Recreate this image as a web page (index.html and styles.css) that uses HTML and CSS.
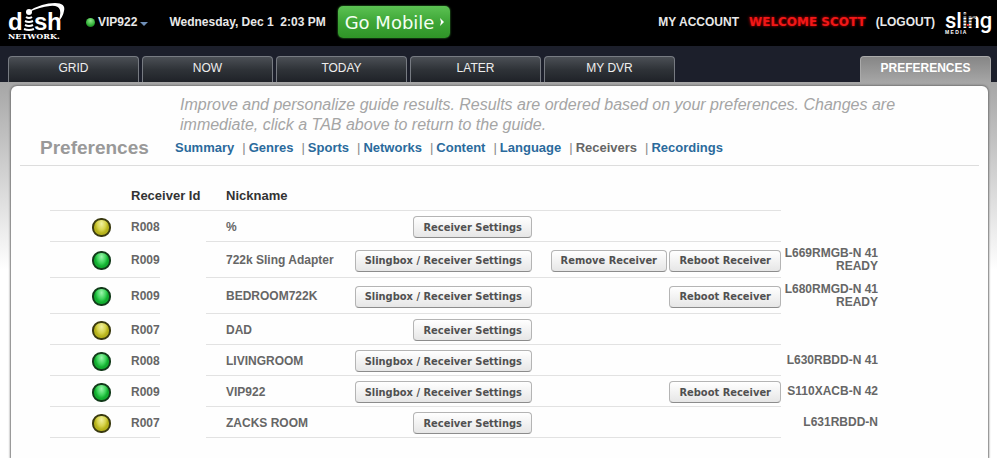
FILE: index.html
```html
<!DOCTYPE html>
<html lang="en">
<head>
    <meta charset="UTF-8">
    <meta name="viewport" content="width=device-width, initial-scale=1.0">
    <title>DISH Network - Preferences</title>
    <link rel="stylesheet" href="styles.css">
</head>
<body>
    <header class="top-bar">
        <a class="logo" href="#" aria-label="Dish Network">
            <svg width="58" height="38" viewBox="0 0 58 38" fill="#fff">
                <text class="logo-dish" x="0" y="27">d</text>
                <text class="logo-dish" x="26" y="27">s</text>
                <text class="logo-dish" x="39" y="27">h</text>
                <circle cx="21" cy="9" r="3"/>
                <path d="M21 8 Q34 0 47 0 Q58 0 56 8 Q55 14 50 19 Q53 12 52 7 Q50 2 42 3 Q32 4 21 9Z"/>
                <g fill="none" stroke="#fff" stroke-width="2">
                    <path d="M18 14 Q21 16 24 14"/>
                    <path d="M17 18 Q21 20 25 18"/>
                    <path d="M17 22 Q21 24 25 22"/>
                    <path d="M16 26 Q21 28 26 26"/>
                </g>
                <text class="logo-network" x="0" y="36">NETWORK.</text>
            </svg>
        </a>
        <button class="receiver-menu" type="button">
            <span class="status-dot"></span>
            VIP922
            <span class="arrow"></span>
        </button>
        <span class="date">Wednesday, Dec 1 &nbsp;2:03 PM</span>
        <a class="go-mobile" href="#">Go Mobile
            <svg width="4" height="8" viewBox="0 0 4 8" fill="#fff"><path d="M0 0 L4 4 L0 8 L1 4Z"/></svg>
        </a>
        <div class="account">
            <a href="#">MY ACCOUNT</a>
            <span class="welcome">WELCOME SCOTT</span>
            <a href="#">(LOGOUT)</a>
            <a class="sling" href="#" aria-label="Sling Media">
                <svg width="46" height="26" viewBox="0 0 46 26" fill="#fff">
                    <text class="sling-name" x="0" y="19">sling</text>
                    <g stroke="#000" stroke-width="1">
                        <path d="M17 5H31M17 8H31M17 11H31M17 14H31M17 17H31"/>
                    </g>
                    <rect x="22" y="15" width="2" height="2" fill="#e33"/>
                    <text class="sling-media" x="0" y="25">M E D I A</text>
                </svg>
            </a>
        </div>
    </header>

    <nav class="tabs">
        <a href="#">GRID</a>
        <a href="#">NOW</a>
        <a href="#">TODAY</a>
        <a href="#">LATER</a>
        <a href="#">MY DVR</a>
        <a class="active" href="#">PREFERENCES</a>
    </nav>

    <main class="panel">
        <div class="panel-head">
            <h1>Preferences</h1>
            <div class="panel-info">
                <p>Improve and personalize guide results. Results are ordered based on your preferences. Changes are immediate, click a TAB above to return to the guide.</p>
                <ul class="sub-nav">
                    <li><a href="#">Summary</a></li>
                    <li><a href="#">Genres</a></li>
                    <li><a href="#">Sports</a></li>
                    <li><a href="#">Networks</a></li>
                    <li><a href="#">Content</a></li>
                    <li><a href="#">Language</a></li>
                    <li><a class="current" href="#">Receivers</a></li>
                    <li><a href="#">Recordings</a></li>
                </ul>
            </div>
        </div>

        <table class="receivers">
            <colgroup>
                <col class="col-light">
                <col class="col-id">
                <col class="col-gap">
                <col class="col-name">
                <col class="col-settings">
                <col class="col-remove">
                <col class="col-reboot">
                <col class="col-status">
            </colgroup>
            <thead>
                <tr>
                    <th></th>
                    <th colspan="2">Receiver Id</th>
                    <th class="name">Nickname</th>
                    <th></th>
                    <th></th>
                    <th></th>
                    <th class="status"></th>
                </tr>
            </thead>
            <tbody>
                <tr>
                    <td class="light"><span class="led yellow"></span></td>
                    <td>R008</td>
                    <td class="gap"></td>
                    <td class="name">%</td>
                    <td class="action"><button type="button">Receiver Settings</button></td>
                    <td class="action"></td>
                    <td class="action"></td>
                    <td class="status"></td>
                </tr>
                <tr>
                    <td class="light"><span class="led green"></span></td>
                    <td>R009</td>
                    <td class="gap"></td>
                    <td class="name">722k Sling Adapter</td>
                    <td class="action"><button type="button">Slingbox / Receiver Settings</button></td>
                    <td class="action"><button type="button">Remove Receiver</button></td>
                    <td class="action"><button type="button">Reboot Receiver</button></td>
                    <td class="status">L669RMGB-N 41<br>READY</td>
                </tr>
                <tr>
                    <td class="light"><span class="led green"></span></td>
                    <td>R009</td>
                    <td class="gap"></td>
                    <td class="name">BEDROOM722K</td>
                    <td class="action"><button type="button">Slingbox / Receiver Settings</button></td>
                    <td class="action"></td>
                    <td class="action"><button type="button">Reboot Receiver</button></td>
                    <td class="status">L680RMGD-N 41<br>READY</td>
                </tr>
                <tr>
                    <td class="light"><span class="led yellow"></span></td>
                    <td>R007</td>
                    <td class="gap"></td>
                    <td class="name">DAD</td>
                    <td class="action"><button type="button">Receiver Settings</button></td>
                    <td class="action"></td>
                    <td class="action"></td>
                    <td class="status"></td>
                </tr>
                <tr>
                    <td class="light"><span class="led green"></span></td>
                    <td>R008</td>
                    <td class="gap"></td>
                    <td class="name">LIVINGROOM</td>
                    <td class="action"><button type="button">Slingbox / Receiver Settings</button></td>
                    <td class="action"></td>
                    <td class="action"></td>
                    <td class="status">L630RBDD-N 41</td>
                </tr>
                <tr>
                    <td class="light"><span class="led green"></span></td>
                    <td>R009</td>
                    <td class="gap"></td>
                    <td class="name">VIP922</td>
                    <td class="action"><button type="button">Slingbox / Receiver Settings</button></td>
                    <td class="action"></td>
                    <td class="action"><button type="button">Reboot Receiver</button></td>
                    <td class="status">S110XACB-N 42</td>
                </tr>
                <tr>
                    <td class="light"><span class="led yellow"></span></td>
                    <td>R007</td>
                    <td class="gap"></td>
                    <td class="name">ZACKS ROOM</td>
                    <td class="action"><button type="button">Receiver Settings</button></td>
                    <td class="action"></td>
                    <td class="action"></td>
                    <td class="status">L631RBDD-N</td>
                </tr>
            </tbody>
        </table>
    </main>
</body>
</html>
```

FILE: styles.css
```css
* {
    box-sizing: border-box;
}
body {
    margin: 0;
    min-height: 100vh;
    display: flex;
    flex-direction: column;
    font-family: "Liberation Sans", Arial, sans-serif;
    font-size: 12px;
    color: #666;
    background: linear-gradient(#a6a6a6 82px, #fff 270px) no-repeat #fff;
}
a {
    color: inherit;
    text-decoration: none;
}

/* top bar */
.top-bar {
    display: flex;
    align-items: center;
    height: 46px;
    padding: 0 6px 2px 8px;
    background: #000;
    color: #e8e8e8;
    font-weight: bold;
    white-space: nowrap;
}
.logo svg, .sling svg {
    display: block;
    overflow: visible;
}
.logo-dish {
    font: bold 24px "Liberation Sans", Arial, sans-serif;
}
.logo-network {
    font: bold 8px "DejaVu Serif", serif;
}
.receiver-menu {
    display: flex;
    align-items: center;
    gap: 3px;
    margin-left: 20px;
    padding: 0;
    border: 0;
    background: none;
    color: inherit;
    font: inherit;
    cursor: pointer;
}
.status-dot {
    width: 9px;
    height: 9px;
    border-radius: 50%;
    background: radial-gradient(circle at 50% 30%, #8fe88a, #2fae35 60%, #0c4a10);
}
.arrow {
    margin-top: 4px;
    border: 4px solid transparent;
    border-top-color: #6f8fb8;
    border-bottom: 0;
}
.date {
    margin-left: 21px;
}
.go-mobile {
    display: flex;
    align-items: center;
    justify-content: space-between;
    width: 112px;
    height: 32px;
    margin-left: 12px;
    padding: 0 6px 0 7px;
    border-radius: 5px;
    background: linear-gradient(#5cc253, #3ea637 50%, #2f9427);
    box-shadow: 0 0 2px #3fae38;
    color: #f4fff2;
    font: 18px "DejaVu Sans", Verdana, sans-serif;
}
.account {
    display: flex;
    align-items: center;
    gap: 10px;
    margin-left: auto;
}
.welcome {
    color: #f01818;
    font-family: "DejaVu Sans", Verdana, sans-serif;
    text-shadow: 0 0 3px #d00;
}
.sling-name {
    font: 500 22px Roboto, sans-serif;
}
.sling-media {
    font: bold 5px "Liberation Sans", Arial, sans-serif;
}

/* tabs */
.tabs {
    display: flex;
    gap: 3px;
    height: 36px;
    padding: 10px 6px 0 8px;
    background: #1c1f2b;
    color: #eee;
}
.tabs a {
    width: 131px;
    height: 26px;
    border: 1px solid #777b82;
    border-bottom: 0;
    border-radius: 4px 4px 0 0;
    background: linear-gradient(#4b4f55, #2f3338 50%, #1f2228);
    line-height: 23px;
    text-align: center;
}
.tabs .active {
    margin-left: auto;
    border-color: #aaa;
    background: linear-gradient(#868686, #a6a6a6);
    color: #fff;
    font-weight: bold;
}

/* content */
.panel {
    flex: 1;
    margin: 4px 9px 0 11px;
    padding: 9px;
    border-radius: 6px 6px 0 0;
    background: #fefefe;
    box-shadow: 0 0 2px 1px #777;
}
.panel-head {
    display: flex;
    align-items: flex-end;
    padding: 0 80px 7px 20px;
    border-bottom: 1px solid #ddd;
}
.panel-head h1 {
    width: 135px;
    margin: 0;
    font-size: 19px;
    line-height: 20px;
    color: #999;
}
.panel-info {
    flex: 1;
}
.panel-info p {
    margin: 0 0 3px 5px;
    font-size: 16px;
    font-style: italic;
    line-height: 20px;
    color: #a5a5a5;
}
.sub-nav {
    display: flex;
    margin: 0;
    padding: 0;
    list-style: none;
    font-size: 13px;
    font-weight: bold;
    line-height: 20px;
    color: #2a6a9c;
}
.sub-nav li + li::before {
    content: "|";
    margin: 0 3px 0 8px;
    font-weight: normal;
    color: #888;
}
.sub-nav .current {
    color: #666;
}

/* receiver list */
.receivers {
    margin: 15px 0 0 30px;
    border-collapse: separate;
    border-spacing: 0;
    table-layout: fixed;
    width: 828px;
    font-weight: bold;
    line-height: 13px;
}
.col-light {
    width: 81px;
}
.col-id {
    width: 29px;
}
.col-gap {
    width: 46px;
}
.col-name {
    width: 148px;
}
.col-settings {
    width: 178px;
}
.col-remove {
    width: 135px;
}
.col-reboot {
    width: 114px;
}
.receivers th {
    height: 30px;
    padding: 0;
    border-bottom: 1px solid #e2e2e2;
    font-size: 13px;
    text-align: left;
    color: #333;
}
.receivers td {
    height: 31px;
    padding: 5px 0 3px;
    border-bottom: 1px solid #e2e2e2;
}
.receivers .gap, .receivers .status {
    border-bottom: 0;
}
.receivers .name {
    padding-left: 20px;
}
.receivers .light {
    padding-left: 42px;
}
.receivers .status {
    padding: 5px 0;
    text-align: right;
    white-space: nowrap;
}
.receivers .action {
    text-align: right;
}
.receivers button {
    display: block;
    height: 22px;
    margin-left: auto;
    padding: 0 9px;
    border: 1px solid #b4b4b4;
    border-bottom-color: #8c8c8c;
    border-radius: 4px;
    background: linear-gradient(#fff, #e6e6e6);
    color: #505050;
    font: bold 11px "DejaVu Sans Condensed", Tahoma, sans-serif;
    white-space: nowrap;
    cursor: pointer;
}
.led {
    display: block;
    width: 19px;
    height: 19px;
    border: 2px solid #222;
    border-radius: 9px;
}
.green {
    border-color: #123a1a;
    background: radial-gradient(ellipse at 50% 25%, #9df5ae, #3fd45c 40%, #12b030 60%, #12a02e);
}
.yellow {
    border-color: #3a3a10;
    background: radial-gradient(ellipse at 50% 25%, #f0f0a0, #d6d34c 40%, #b8b41c 60%, #a8a41c);
}
```
